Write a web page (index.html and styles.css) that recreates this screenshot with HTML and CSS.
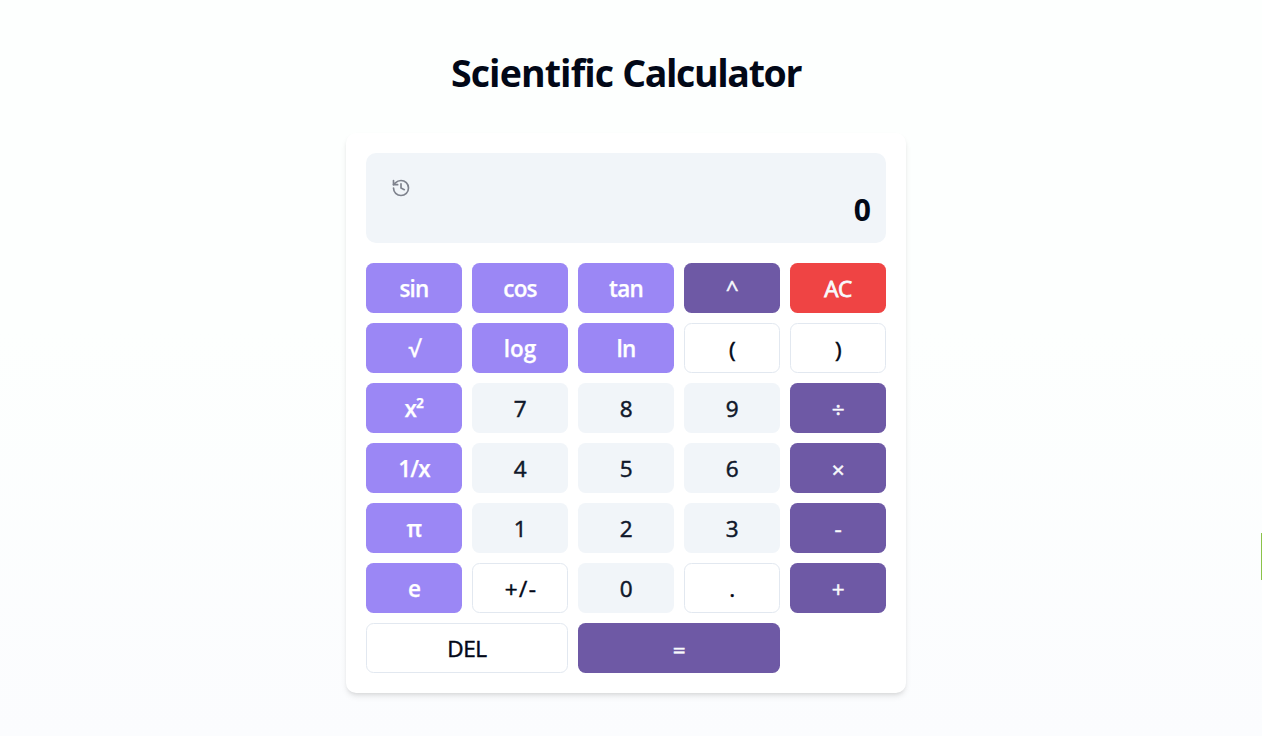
FILE: index.html
```
<!DOCTYPE html>
<html lang="en">
<head>
<meta charset="utf-8">
<title>Scientific Calculator</title>
<link rel="stylesheet" href="styles.css">
</head>
<body>
<main class="page">
  <h1 class="title">Scientific <span class="title-end">Calculator</span></h1>
  <section class="calculator">
    <div class="display">
      <button class="history" aria-label="History">
        <svg viewBox="0 0 24 24" fill="none" stroke="currentColor" stroke-width="2" stroke-linecap="round" stroke-linejoin="round"><path d="M3 12a9 9 0 1 0 9-9 9.75 9.75 0 0 0-6.74 2.74L3 8"/><path d="M3 3v5h5"/><path d="M12 7v5l4 2"/></svg>
      </button>
      <output class="value">0</output>
    </div>
    <div class="keys">
      <button class="key fn">sin</button>
      <button class="key fn">cos</button>
      <button class="key fn">tan</button>
      <button class="key op">^</button>
      <button class="key clear">AC</button>
      <button class="key fn">√</button>
      <button class="key fn log">log</button>
      <button class="key fn">ln</button>
      <button class="key plain paren">(</button>
      <button class="key plain paren">)</button>
      <button class="key fn">x²</button>
      <button class="key num">7</button>
      <button class="key num">8</button>
      <button class="key num">9</button>
      <button class="key op symbol">÷</button>
      <button class="key fn">1/x</button>
      <button class="key num">4</button>
      <button class="key num">5</button>
      <button class="key num">6</button>
      <button class="key op symbol">×</button>
      <button class="key fn">π</button>
      <button class="key num">1</button>
      <button class="key num">2</button>
      <button class="key num">3</button>
      <button class="key op">-</button>
      <button class="key fn">e</button>
      <button class="key plain sign">+/-</button>
      <button class="key num">0</button>
      <button class="key plain">.</button>
      <button class="key op">+</button>
      <button class="key plain wide">DEL</button>
      <button class="key op symbol wide">=</button>
    </div>
  </section>
</main>
<div class="edge-tab"></div>
</body>
</html>
```
FILE: styles.css
```
* {
  box-sizing: border-box;
}

body {
  margin: 0;
  font-family: "Open Sans", "Noto Sans", sans-serif;
  color: #020817;
}

.page {
  height: 736px;
  padding: 48px 10px 0 0;
  overflow: hidden;
  display: flex;
  flex-direction: column;
  align-items: center;
  background: linear-gradient(180deg, #fdfffe 0%, #fdfffe 45%, #fbfcfe 100%);
}

.title {
  margin: 0 0 35px;
  font-size: 37.5px;
  line-height: 50px;
  font-weight: 700;
  letter-spacing: -0.88px;
  white-space: nowrap;
}

.title-end {
  letter-spacing: -1.36px;
}

.calculator {
  width: 560px;
  height: 560px;
  padding: 20px;
  display: flex;
  flex-direction: column;
  gap: 20px;
  background: #fff;
  border-radius: 10px;
  box-shadow: 0 4px 6px -1px rgba(0, 0, 0, 0.1), 0 2px 4px -2px rgba(0, 0, 0, 0.1);
}

.display {
  height: 90px;
  padding: 15px;
  display: flex;
  justify-content: space-between;
  background: #f1f5f9;
  border-radius: 10px;
}

.history {
  width: 40px;
  height: 40px;
  padding: 0;
  display: flex;
  align-items: center;
  justify-content: center;
  border: 0;
  background: none;
  color: #7e828d;
}

.history svg {
  width: 20px;
  height: 20px;
}

.value {
  align-self: flex-end;
  margin-bottom: -2px;
  font-size: 30px;
  line-height: 40px;
  font-weight: 700;
}

.keys {
  display: grid;
  grid-template-columns: repeat(5, 96px);
  grid-auto-rows: 50px;
  gap: 10px;
}

.key {
  padding: 1px 0 0;
  border: 0;
  border-radius: 7.5px;
  font: 400 22.5px/35px "Open Sans", "Noto Sans", sans-serif;
  letter-spacing: -0.4px;
  -webkit-text-stroke: 0.5px currentColor;
}

.fn {
  background: #9b87f5;
  color: #fff;
  font-weight: 600;
  letter-spacing: -0.8px;
  -webkit-text-stroke: 0.25px currentColor;
}

.log {
  letter-spacing: 0;
}

.op {
  background: #6e59a5;
  color: #f8fafc;
}

.clear {
  background: #ef4444;
  color: #f8fafc;
  -webkit-text-stroke: 0.8px currentColor;
}

.num {
  background: #f1f5f9;
  color: #0f172a;
}

.plain {
  border: 1px solid #e2e8f0;
  background: #fff;
  color: #020817;
}

.paren,
.symbol {
  padding-top: 3px;
}

.sign {
  padding-left: 2px;
  letter-spacing: 1.4px;
}

.wide {
  grid-column: span 2;
}

.edge-tab {
  position: absolute;
  top: 533px;
  right: 0;
  width: 1px;
  height: 47px;
  background: #8bc34a;
}
```
